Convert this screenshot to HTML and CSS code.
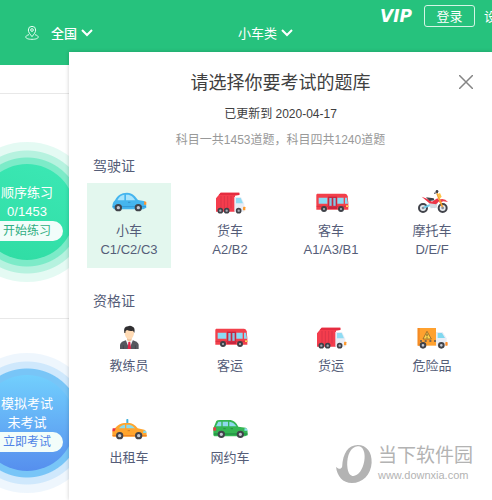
FILE: index.html
```html
<!DOCTYPE html>
<html lang="zh-CN">
<head>
    <meta charset="UTF-8">
    <meta name="viewport" content="width=device-width, initial-scale=1.0">
    <title>选择题库</title>
    <link rel="stylesheet" href="styles.css">
</head>
<body>
    <!-- shared vehicle icons -->
    <svg class="sprite" aria-hidden="true">
        <symbol id="truck" viewBox="0 0 108 78">
            <path d="M12 28L26 11H82V18L69 20V68H12Z" fill="#f43d4d"/>
            <path d="M27 21V58M37 21V58M47 21V58M57 21V58" stroke="#dc3549" stroke-width="3"/>
            <path d="M26 11H82V18H20Z" fill="#e52c40"/>
            <path d="M67 24H87L97 44V68H67Z" fill="#e9edf5"/>
            <path d="M72 27H86L93 43H72Z" fill="#8fdcf3"/>
            <rect x="93" y="53" width="7" height="11" rx="2" fill="#ff9a2e"/>
            <g fill="#a9adb8" stroke="#3f4148" stroke-width="5">
                <circle cx="25" cy="65" r="6"/><circle cx="44" cy="65" r="6"/><circle cx="80" cy="65" r="6"/>
            </g>
        </symbol>
        <symbol id="bus" viewBox="0 0 108 78">
            <path d="M12 14H96Q103 14 104 22L106 42V62H10V17Z" fill="#f2404b"/>
            <path d="M17 26H43V44H17ZM73 26H92V44H73ZM96 26H102L105 44H96Z" fill="#8bdcf5"/>
            <path d="M45 23H72V60H45Z" fill="#c92640"/>
            <path d="M49 27H56V51H49ZM61 27H68V51H61Z" fill="#82c7e4"/>
            <path d="M11 52H106" stroke="#d82f43" stroke-width="3"/>
            <rect x="99" y="49" width="7" height="5" fill="#ffd45a"/>
            <g fill="#b6bac3" stroke="#3f4148" stroke-width="6">
                <circle cx="33" cy="60" r="6"/><circle cx="84" cy="60" r="6"/>
            </g>
        </symbol>
        <symbol id="arrow" viewBox="0 0 12 8">
            <path d="M1 1L6 6L11 1" fill="none" stroke="#fff" stroke-width="2"/>
        </symbol>
    </svg>

    <header class="header">
        <nav class="account">
            <a class="vip" href="#">VIP</a>
            <button class="login" type="button">登录</button>
            <a class="settings" href="#">设置</a>
        </nav>
        <div class="filters">
            <button class="filter city" type="button">
                <svg class="pin" viewBox="0 0 42 42" fill="none" stroke="#e5fff3" stroke-width="3">
                    <path d="M21 32C15 24 10 19 10 12A11 11 0 0 1 32 12C32 19 27 24 21 32Z"/>
                    <circle cx="21" cy="12" r="4"/>
                    <path d="M12 26C-3 30 -1 40 21 40S45 30 30 26"/>
                </svg>
                <span>全国</span>
                <svg class="arrow"><use href="#arrow"/></svg>
            </button>
            <button class="filter kind" type="button">
                <span>小车类</span>
                <svg class="arrow"><use href="#arrow"/></svg>
            </button>
        </div>
    </header>

    <main class="main">
        <section class="task">
            <div class="circle green">
                <div class="disc">
                    <span>顺序练习</span>
                    <span class="count">0/1453</span>
                    <button class="start" type="button">开始练习</button>
                </div>
            </div>
        </section>
        <section class="task exam">
            <div class="circle blue">
                <div class="disc">
                    <span>模拟考试</span>
                    <span>未考试</span>
                    <button class="start" type="button">立即考试</button>
                </div>
            </div>
        </section>
    </main>

    <div class="dialog" role="dialog" aria-labelledby="dialogTitle">
        <button class="close" type="button" aria-label="关闭">
            <svg viewBox="0 0 14 14"><path d="M0 0L14 14M14 0L0 14" stroke="#858585" stroke-width="1.5"/></svg>
        </button>
        <h1 id="dialogTitle">请选择你要考试的题库</h1>
        <p class="updated">已更新到 2020-04-17</p>
        <p class="total">科目一共1453道题，科目四共1240道题</p>

        <h2>驾驶证</h2>
        <div class="grid">
            <button class="item active" type="button">
                <svg class="icon" viewBox="0 0 108 78">
                    <path d="M4 55Q4 40 12 34C20 18 30 12 48 11C66 11 73 23 81 33L98 36Q106 38 106 56L97 61H9Z" fill="#45b5ee"/>
                    <path d="M19 34Q27 18 40 17V34ZM45 17C60 16 66 23 73 34H45Z" fill="#a8e4fb"/>
                    <path d="M5 53H105" stroke="#3197d6" stroke-width="3"/>
                    <path d="M100 36L106 39V47H99Z" fill="#ff962f"/>
                    <path d="M51 40H58" stroke="#2c83bd" stroke-width="2"/>
                    <g fill="#c4c8d1" stroke="#41434a" stroke-width="6"><circle cx="22" cy="56" r="8"/><circle cx="82" cy="56" r="8"/></g>
                </svg>
                <span>小车</span>
                <span>C1/C2/C3</span>
            </button>
            <button class="item" type="button">
                <svg class="icon"><use href="#truck"/></svg>
                <span>货车</span>
                <span>A2/B2</span>
            </button>
            <button class="item" type="button">
                <svg class="icon"><use href="#bus"/></svg>
                <span>客车</span>
                <span>A1/A3/B1</span>
            </button>
            <button class="item" type="button">
                <svg class="icon" viewBox="0 0 108 78">
                    <g fill="#e7ebef" stroke="#41434a" stroke-width="6"><circle cx="27" cy="57" r="12"/><circle cx="86" cy="57" r="12"/></g>
                    <path d="M27 57L51 47L63 55" fill="none" stroke="#74cbe9" stroke-width="6"/>
                    <path d="M44 41L72 36L68 56L50 58Z" fill="#d4dae1"/>
                    <path d="M23 23L39 29L54 38L70 28L77 35L66 46L46 43Z" fill="#ed3547"/>
                    <path d="M36 25L59 28L61 34L47 36Z" fill="#3f4148"/>
                    <path d="M74 32Q91 25 102 39L88 37L77 41Z" fill="#f04350"/>
                    <path d="M69 13L87 58" stroke="#f5a02f" stroke-width="5"/>
                    <path d="M70 16L78 12L83 23L77 29Z" fill="#ffc34b"/>
                    <path d="M60 13L72 10" stroke="#3f4148" stroke-width="3"/>
                    <circle cx="69" cy="7" r="4" fill="#3f4148"/>
                    <circle cx="27" cy="57" r="4" fill="#8a909b"/><circle cx="86" cy="57" r="4" fill="#8a909b"/>
                </svg>
                <span>摩托车</span>
                <span>D/E/F</span>
            </button>
        </div>

        <h2>资格证</h2>
        <div class="grid">
            <button class="item" type="button">
                <svg class="icon" viewBox="0 0 108 78">
                    <path d="M27 75V62Q28 55 44 49H66Q82 55 83 62V75Z" fill="#56585e"/>
                    <path d="M44 47L55 75L66 47Z" fill="#f4f7fb"/>
                    <path d="M48 37H62V48L55 55L48 48Z" fill="#efc49c"/>
                    <path d="M52 54H58L60 75H50Z" fill="#e32648"/>
                    <path d="M41 18H69V29Q66 44 55 46Q44 44 41 29Z" fill="#ffdbb5"/>
                    <path d="M40 27Q36 8 51 7Q57 3 65 8Q73 11 70 27L66 20Q58 23 48 18Q42 19 43 27Z" fill="#302f31"/>
                    <path d="M37 64V75M73 64V75" stroke="#3e4046" stroke-width="2"/>
                </svg>
                <span>教练员</span>
            </button>
            <button class="item" type="button">
                <svg class="icon"><use href="#bus"/></svg>
                <span>客运</span>
            </button>
            <button class="item" type="button">
                <svg class="icon"><use href="#truck"/></svg>
                <span>货运</span>
            </button>
            <button class="item" type="button">
                <svg class="icon" viewBox="0 0 108 78">
                    <path d="M11 12H66V65H11Z" fill="#ffa12f"/>
                    <path d="M11 12H17V65H11Z" fill="#f48a25"/>
                    <path d="M39 22L52 45H27Z" fill="#ffd34d" stroke="#735129" stroke-width="2"/>
                    <path d="M39 29V37M39 40V43" stroke="#604827" stroke-width="3"/>
                    <path d="M18 51H66" stroke="#57565a" stroke-width="5" stroke-dasharray="6 8"/>
                    <path d="M66 24H86L98 43V66H66Z" fill="#e8edf6"/>
                    <path d="M71 27H84L93 42H71Z" fill="#80d8ef"/>
                    <rect x="94" y="54" width="7" height="11" rx="2" fill="#ff8f28"/>
                    <g fill="#c4c8d1" stroke="#41434a" stroke-width="6"><circle cx="27" cy="64" r="7"/><circle cx="82" cy="64" r="7"/></g>
                </svg>
                <span>危险品</span>
            </button>
            <button class="item" type="button">
                <svg class="icon" viewBox="0 0 108 78">
                    <rect x="46" y="9" width="6" height="14" rx="2" fill="#42b1da"/>
                    <path d="M4 61V46L12 37Q24 22 39 21H56Q68 22 80 37L100 41Q108 44 107 62H8Z" fill="#ffa52e"/>
                    <path d="M24 37Q31 26 42 26V37ZM46 26H55Q64 27 72 37H46Z" fill="#8bdcee"/>
                    <path d="M5 59H107" stroke="#ef8424" stroke-width="4"/>
                    <path d="M5 37H14L11 46H4Z" fill="#e83243"/>
                    <path d="M98 43L106 46V51H96Z" fill="#83d9ee"/>
                    <path d="M50 44H57" stroke="#b96b1f" stroke-width="2"/>
                    <g fill="#c4c8d1" stroke="#41434a" stroke-width="6"><circle cx="26" cy="59" r="8"/><circle cx="83" cy="59" r="8"/></g>
                </svg>
                <span>出租车</span>
            </button>
            <button class="item" type="button">
                <svg class="icon" viewBox="0 0 108 78">
                    <path d="M4 58V37L13 15Q15 12 24 12H56Q70 14 79 32L101 35Q108 38 107 58L99 61H7Z" fill="#35b653"/>
                    <path d="M12 31L19 17H28V31ZM32 17H48V31H32ZM52 17Q65 18 73 31H52Z" fill="#8fd9ed"/>
                    <path d="M6 54H106" stroke="#249346" stroke-width="4"/>
                    <path d="M4 34H12V44H4Z" fill="#e83b47"/>
                    <path d="M98 36L106 39V44H97Z" fill="#92dff5"/>
                    <path d="M34 38H41M56 38H63" stroke="#1d7c38" stroke-width="2"/>
                    <g fill="#c4c8d1" stroke="#41434a" stroke-width="6"><circle cx="28" cy="55" r="8"/><circle cx="85" cy="55" r="8"/></g>
                </svg>
                <span>网约车</span>
            </button>
        </div>
    </div>

    <div class="watermark">
        <svg class="mark" viewBox="0 0 106 112">
            <path fill="#b3b3b3" fill-rule="evenodd" d="M0 64C8 72 14 72 18 64C20 24 36 0 64 0C91 0 106 22 105 52C103 87 78 112 47 112C20 112 3 92 0 64ZM57 5C38 11 30 43 34 69C38 96 57 97 71 79C88 57 91 9 68 4C64 3 61 3 57 5Z"/>
        </svg>
        <div class="brand">
            <span class="name">当下软件园</span>
            <span class="site">www.downxia.com</span>
        </div>
    </div>
</body>
</html>
```
FILE: styles.css
```css
* {
    box-sizing: border-box;
}
body {
    margin: 0;
    min-height: 100vh;
    position: relative;
    overflow: hidden;
    background: #fff;
    font-family: "Liberation Sans", "Noto Sans CJK SC", sans-serif;
    font-size: 13px;
    line-height: 19px;
}
button {
    padding: 0;
    border: 0;
    background: none;
    color: inherit;
    font: inherit;
}
a {
    color: inherit;
    text-decoration: none;
}
h1, h2, p {
    margin: 0;
    font-weight: normal;
}
svg {
    display: block;
}
.sprite {
    position: absolute;
    width: 0;
    height: 0;
}

/* header */
.header {
    height: 65px;
    padding-top: 5px;
    background: #26c27d;
    color: #fff;
}
.account {
    display: flex;
    justify-content: flex-end;
    align-items: center;
    height: 22px;
    margin-right: -18px;
    white-space: nowrap;
}
.vip {
    margin-right: 12px;
    font-family: "DejaVu Sans", sans-serif;
    font-size: 17px;
    font-style: italic;
    font-weight: bold;
}
.login {
    width: 51px;
    height: 22px;
    margin-right: 9px;
    border: 1px solid #d4f5e5;
    border-radius: 3px;
}
.filters {
    display: flex;
    justify-content: space-between;
    padding: 0 199px 0 25px;
    margin-top: -4px;
}
.filter {
    display: flex;
    align-items: center;
    gap: 4px;
    height: 20px;
}
.filter.city {
    font-weight: 500;
}
.pin {
    width: 14px;
    height: 14px;
    margin-right: 8px;
}
.arrow {
    width: 12px;
    height: 8px;
}

/* practice column */
.main {
    padding-top: 28px;
}
.task {
    display: flex;
    padding: 48px 0 36px;
    border-top: 1px solid #e8e8e8;
}
.task.exam {
    padding: 34px 0 0;
}
.circle {
    flex: none;
    width: 140px;
    height: 140px;
    margin-left: -43px;
    padding: 22px;
    border-radius: 50%;
}
.green {
    background: radial-gradient(circle, #7cebc8 54px, #b6f2df 55px, #b6f2df 61px, #e4faf3 62px);
    color: #2fae82;
}
.blue {
    background: radial-gradient(circle, #78c5f7 54px, #cfe8fc 55px, #cfe8fc 61px, #eef6fd 62px);
    color: #4f83e6;
}
.disc {
    display: flex;
    flex-direction: column;
    align-items: center;
    height: 96px;
    padding-top: 19px;
    border-radius: 50%;
}
.disc span {
    color: #fff;
}
.green .disc {
    background: linear-gradient(200deg, #3ce8b5, #2fdca3);
}
.blue .disc {
    background: linear-gradient(#72cffd, #568fee);
}
.start {
    width: 72px;
    height: 20px;
    border-radius: 10px;
    background: #f2fdfa;
    font-size: 12px;
}

/* question bank dialog */
.dialog {
    position: absolute;
    top: 52px;
    right: 0;
    bottom: 0;
    left: 69px;
    padding: 18px;
    background: #fff;
    box-shadow: 0 0 4px rgba(0, 0, 0, 0.2);
    color: #555d78;
    text-align: center;
}
.close {
    position: absolute;
    top: 23px;
    right: 19px;
}
.close svg {
    width: 14px;
    height: 14px;
}
.dialog h1 {
    color: #404040;
    font-size: 18px;
    line-height: 26px;
}
.updated {
    margin-top: 8px;
    color: #404040;
    font-size: 12px;
    line-height: 20px;
}
.total {
    margin-top: 6px;
    color: #999;
    font-size: 12px;
    line-height: 20px;
}
.dialog h2 {
    margin: 22px 6px 6px;
    font-size: 14px;
    line-height: 22px;
    text-align: left;
}
.total + h2 {
    margin-top: 5px;
}
.grid {
    display: grid;
    grid-template-columns: repeat(4, 1fr);
    gap: 26px 17px;
}
.item {
    display: flex;
    flex-direction: column;
    align-items: center;
    padding: 6px 0 9px;
}
.item.active {
    background: #e3f7ee;
}
.icon {
    width: 36px;
    height: 26px;
    margin-bottom: 6px;
}

/* site mark in the corner */
.watermark {
    position: absolute;
    right: 19px;
    bottom: 17px;
    display: flex;
    align-items: center;
    gap: 6px;
    color: #b3b3b3;
}
.mark {
    width: 36px;
    height: 38px;
}
.brand {
    display: flex;
    flex-direction: column;
}
.name {
    font-size: 19px;
    line-height: 23px;
}
.site {
    font-size: 11px;
    line-height: 16px;
}
```
